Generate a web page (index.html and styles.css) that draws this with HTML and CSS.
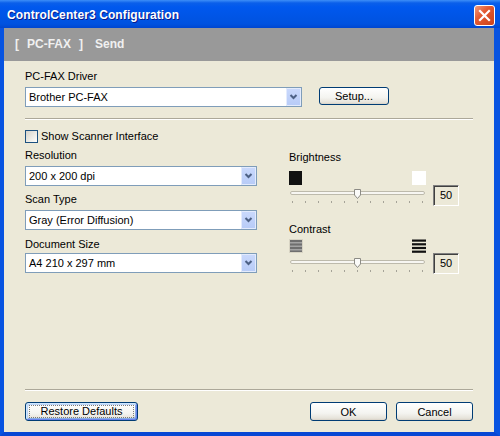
FILE: index.html
```html
<!DOCTYPE html>
<html lang="en">
<head>
    <meta charset="UTF-8">
    <title>ControlCenter3 Configuration</title>
    <link rel="stylesheet" href="styles.css">
</head>
<body>
    <div class="titlebar">
        <span class="title">ControlCenter3 Configuration</span>
        <span class="close">
            <svg width="13" height="13" viewBox="0 0 13 13"><path d="M2 2 L11 11 M11 2 L2 11" stroke="#fff" stroke-width="2.2" stroke-linecap="square"/></svg>
        </span>
    </div>

    <div class="frame">
        <div class="band">
            <span>[</span><span>PC-FAX</span><span>]</span><span class="band-sub">Send</span>
        </div>

        <div class="content">
            <div class="label driver-label">PC-FAX Driver</div>
            <div class="driver-row">
                <div class="combo wide">
                    <span class="combo-text">Brother PC-FAX</span>
                    <span class="combo-btn"><svg width="15" height="18" viewBox="0 0 15 18"><path d="M4.5 7 L7.5 10 L10.5 7" fill="none" stroke="#4d6185" stroke-width="2"/></svg></span>
                </div>
                <button class="btn setup">Setup...</button>
            </div>

            <div class="separator"></div>

            <div class="check-row">
                <span class="checkbox"></span>
                <span>Show Scanner Interface</span>
            </div>

            <div class="columns">
                <div class="col-left">
                    <div class="label">Resolution</div>
                    <div class="combo">
                        <span class="combo-text">200 x 200 dpi</span>
                        <span class="combo-btn"><svg width="15" height="18" viewBox="0 0 15 18"><path d="M4.5 7 L7.5 10 L10.5 7" fill="none" stroke="#4d6185" stroke-width="2"/></svg></span>
                    </div>
                    <div class="label gap-scan">Scan Type</div>
                    <div class="combo">
                        <span class="combo-text">Gray (Error Diffusion)</span>
                        <span class="combo-btn"><svg width="15" height="18" viewBox="0 0 15 18"><path d="M4.5 7 L7.5 10 L10.5 7" fill="none" stroke="#4d6185" stroke-width="2"/></svg></span>
                    </div>
                    <div class="label gap-doc">Document Size</div>
                    <div class="combo tight">
                        <span class="combo-text">A4 210 x 297 mm</span>
                        <span class="combo-btn"><svg width="15" height="18" viewBox="0 0 15 18"><path d="M4.5 7 L7.5 10 L10.5 7" fill="none" stroke="#4d6185" stroke-width="2"/></svg></span>
                    </div>
                </div>

                <div class="col-right">
                    <div class="label">Brightness</div>
                    <div class="slider-group">
                        <div class="slider-main">
                            <div class="icons">
                                <span class="swatch black"></span>
                                <span class="swatch white"></span>
                            </div>
                            <svg class="slider" width="137" height="21" viewBox="0 0 137 21">
                                <rect x="1.5" y="6.5" width="134" height="3" rx="1.5" fill="#f7f6f2" stroke="#bdbaac"/>
                                <path d="M65.5 4.5 h6 v5.5 l-3 3.5 l-3 -3.5 z" fill="#fbfbf9" stroke="#8c8b85"/>
                                <g fill="#a5a398">
                                    <rect x="3" y="16" width="1" height="2"/><rect x="16" y="16" width="1" height="2"/>
                                    <rect x="29" y="16" width="1" height="2"/><rect x="42" y="16" width="1" height="2"/>
                                    <rect x="55" y="16" width="1" height="2"/><rect x="68" y="16" width="1" height="2"/>
                                    <rect x="81" y="16" width="1" height="2"/><rect x="94" y="16" width="1" height="2"/>
                                    <rect x="107" y="16" width="1" height="2"/><rect x="120" y="16" width="1" height="2"/>
                                    <rect x="133" y="16" width="1" height="2"/>
                                </g>
                            </svg>
                        </div>
                        <div class="value">50</div>
                    </div>

                    <div class="label gap-contrast">Contrast</div>
                    <div class="slider-group">
                        <div class="slider-main">
                            <div class="icons contrast-icons">
                                <svg width="14" height="14" viewBox="0 0 14 14">
                                    <rect x="0.5" y="0.5" width="13" height="13" fill="#6f6f6f" stroke="#d8d4c4"/>
                                    <rect x="1" y="3" width="12" height="1.5" fill="#a4a4a4"/>
                                    <rect x="1" y="6.5" width="12" height="1.5" fill="#a4a4a4"/>
                                    <rect x="1" y="10" width="12" height="1.5" fill="#a4a4a4"/>
                                </svg>
                                <svg width="14" height="14" viewBox="0 0 14 14">
                                    <rect x="0" y="0.5" width="14" height="2.2" fill="#111"/>
                                    <rect x="0" y="4.2" width="14" height="2.2" fill="#111"/>
                                    <rect x="0" y="7.9" width="14" height="2.2" fill="#111"/>
                                    <rect x="0" y="11.6" width="14" height="2.2" fill="#111"/>
                                </svg>
                            </div>
                            <svg class="slider" width="137" height="21" viewBox="0 0 137 21">
                                <rect x="1.5" y="7.5" width="134" height="3" rx="1.5" fill="#f7f6f2" stroke="#bdbaac"/>
                                <path d="M65.5 5.5 h6 v5.5 l-3 3.5 l-3 -3.5 z" fill="#fbfbf9" stroke="#8c8b85"/>
                                <g fill="#a5a398">
                                    <rect x="3" y="17" width="1" height="2"/><rect x="16" y="17" width="1" height="2"/>
                                    <rect x="29" y="17" width="1" height="2"/><rect x="42" y="17" width="1" height="2"/>
                                    <rect x="55" y="17" width="1" height="2"/><rect x="68" y="17" width="1" height="2"/>
                                    <rect x="81" y="17" width="1" height="2"/><rect x="94" y="17" width="1" height="2"/>
                                    <rect x="107" y="17" width="1" height="2"/><rect x="120" y="17" width="1" height="2"/>
                                    <rect x="133" y="17" width="1" height="2"/>
                                </g>
                            </svg>
                        </div>
                        <div class="value">50</div>
                    </div>
                </div>
            </div>

            <div class="footer">
                <div class="separator"></div>
                <div class="buttons">
                    <button class="btn restore default"><span class="focus">Restore Defaults</span></button>
                    <div class="spacer"></div>
                    <button class="btn action">OK</button>
                    <button class="btn action">Cancel</button>
                </div>
            </div>
        </div>
    </div>
</body>
</html>
```

FILE: styles.css
```css
html, body {
    margin: 0;
    padding: 0;
}

body {
    width: 500px;
    height: 436px;
    overflow: hidden;
    font-family: "Liberation Sans", Arial, sans-serif;
    font-size: 11px;
    color: #000;
    background: #ece9d8;
    display: flex;
    flex-direction: column;
}

.titlebar {
    height: 28px;
    flex: none;
    display: flex;
    align-items: flex-start;
    justify-content: space-between;
    background: linear-gradient(#3d8ef8 0, #0a5fea 3px, #0058ee 7px, #0055e6 16px, #0052df 24px, #0046cf 28px);
}

.title {
    padding: 3px 0 0 7px;
    line-height: 25px;
    font-size: 12px;
    font-weight: bold;
    letter-spacing: 0.1px;
    color: #fff;
    text-shadow: 1px 1px 0 #0a1a8a;
}

.close {
    margin: 5px 5px 0 0;
    width: 19px;
    height: 19px;
    border: 1px solid #fff;
    border-radius: 3px;
    background: linear-gradient(135deg, #f09a7c 0%, #e35a32 40%, #c9421a 100%);
    display: flex;
    align-items: center;
    justify-content: center;
}

.frame {
    flex: 1;
    display: flex;
    flex-direction: column;
    border-left: 4px solid #0753e1;
    border-right: 6px solid #0753e1;
    border-bottom: 4px solid #0747d4;
}

.band {
    height: 33px;
    flex: none;
    background: #999999;
    color: #f0f0f0;
    font-size: 12px;
    font-weight: bold;
    line-height: 33px;
    padding-left: 11px;
    display: flex;
    gap: 8px;
}

.band-sub {
    margin-left: 4px;
}

.content {
    flex: 1;
    display: flex;
    flex-direction: column;
    padding: 0 21px;
}

.label {
    line-height: 13px;
    height: 13px;
}

.driver-label {
    margin-top: 9px;
}

.driver-row {
    display: flex;
    align-items: flex-start;
    margin-top: 4px;
}

.combo {
    height: 18px;
    border: 1px solid #7f9db9;
    background: #fff;
    display: flex;
    align-items: center;
    margin-top: 4px;
}

.driver-row .combo {
    margin-top: 0;
}

.combo.wide {
    width: 275px;
}

.combo.tight {
    margin-top: 2px;
}

.combo-text {
    flex: 1;
    padding-left: 3px;
    line-height: 18px;
}

.combo-btn {
    width: 15px;
    height: 18px;
    background: linear-gradient(#cad9fc, #b7cbf7);
    box-shadow: inset 0 0 0 1px #e3ebfd;
    border-radius: 1px;
    display: flex;
}

.btn {
    font-family: "Liberation Sans", Arial, sans-serif;
    font-size: 11px;
    color: #000;
    border: 1px solid #003c74;
    border-radius: 3px;
    background: linear-gradient(#ffffff 0%, #f4f4f0 60%, #e6e3da 90%, #d6d0c5 100%);
    padding: 0;
    margin: 0;
}

.setup {
    width: 70px;
    height: 18px;
    margin-left: 17px;
    line-height: 16px;
}

.separator {
    border-top: 1px solid #aca899;
    border-bottom: 1px solid #fff;
    margin-top: 11px;
    box-sizing: border-box;
    height: 2px;
}

.check-row {
    display: flex;
    align-items: center;
    gap: 3px;
    height: 13px;
    margin-top: 10px;
    line-height: 13px;
}

.checkbox {
    width: 11px;
    height: 11px;
    border: 1px solid #1c5180;
    background: linear-gradient(135deg, #d5d3cb 0%, #eeede7 60%, #fff 100%);
}

.columns {
    display: flex;
    gap: 32px;
}

.col-left {
    width: 232px;
    display: flex;
    flex-direction: column;
    padding-top: 6px;
}

.gap-scan {
    margin-top: 7px;
}

.gap-doc {
    margin-top: 8px;
}

.col-right {
    display: flex;
    flex-direction: column;
    padding-top: 8px;
}

.slider-group {
    display: flex;
    align-items: flex-end;
    gap: 7px;
}

.slider-main {
    width: 137px;
    display: flex;
    flex-direction: column;
}

.icons {
    display: flex;
    justify-content: space-between;
    margin-top: 7px;
    height: 14px;
}

.contrast-icons {
    margin-top: 3px;
}

.swatch {
    width: 13px;
    height: 14px;
}

.swatch.black {
    background: #111;
}

.swatch.white {
    width: 14px;
    background: #fff;
}

.slider {
    display: block;
}

.value {
    width: 24px;
    height: 19px;
    border-top: 1px solid #808080;
    border-left: 1px solid #808080;
    border-right: 1px solid #fff;
    border-bottom: 1px solid #fff;
    box-shadow: inset 1px 1px 0 #404040;
    text-align: center;
    line-height: 19px;
}

.gap-contrast {
    margin-top: 17px;
}

.footer {
    margin-top: auto;
    padding-bottom: 11px;
}

.footer .separator {
    margin-top: 0;
}

.buttons {
    display: flex;
    margin-top: 11px;
    gap: 9px;
}

.spacer {
    flex: 1;
}

.restore {
    width: 113px;
    height: 19px;
    display: flex;
    box-shadow: inset 1px 1px 0 #cee7ff, inset -1px -1px 0 #6982ee, inset 2px 2px 0 #bcd4f6, inset -2px -2px 0 #89ade4;
}

.focus {
    flex: 1;
    margin: 2px 3px;
    border: 1px dotted #7a7a7a;
    line-height: 11px;
    text-align: center;
}

.action {
    width: 77px;
    height: 19px;
}
```
